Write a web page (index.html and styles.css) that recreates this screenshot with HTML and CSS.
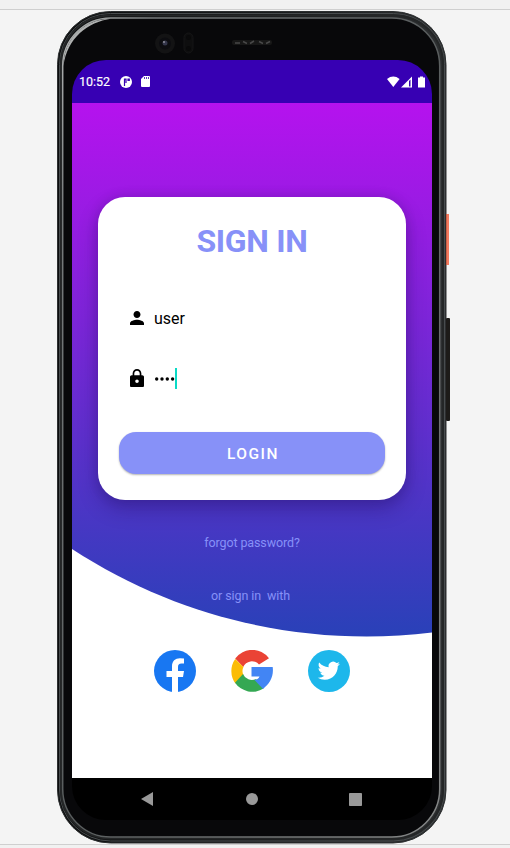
FILE: index.html
```html
<!DOCTYPE html>
<html lang="en">
<head>
<meta charset="utf-8">
<title>Sign in</title>
<link rel="stylesheet" href="styles.css">
</head>
<body>
<div class="stage">
  <div class="phone">
    <svg class="frame" width="396" height="834" viewBox="56 10 396 834" aria-hidden="true">
      <defs>
        <linearGradient id="rim" x1="0" y1="0" x2="1" y2="1"><stop offset="0" stop-color="#b6b8b8"/><stop offset=".12" stop-color="#777b7c"/><stop offset=".5" stop-color="#585c5d"/><stop offset="1" stop-color="#858787"/></linearGradient>
        <linearGradient id="shell"><stop offset="0" stop-color="#0c0d0e"/><stop offset=".5" stop-color="#17191a"/><stop offset="1" stop-color="#2d2f31"/></linearGradient>
      </defs>
      <rect x="57.5" y="11.5" width="388.500" height="831.5" rx="53" fill="url(#shell)" stroke="#2c2f30"/>
      <rect x="59.5" y="13.5" width="385" height="827.5" rx="51" fill="none" stroke="#484c4e"/>
      <rect x="61" y="15.5" width="382" height="823" rx="49" fill="none" stroke="#242627" stroke-width="2"/>
      <rect x="62.700" y="18" width="377" height="819" rx="48" fill="#08080a" stroke="url(#rim)" stroke-width="1.500"/>
      <path d="M63.500 66C63.500 39 84 19 111 18.800C88 22 67 38 63.500 66Z" fill="#aeb0b0"/>
      <rect x="446" y="214" width="3" height="51" fill="#f47a5f"/>
      <path d="M446.500 214v51" stroke="#c96048"/>
      <rect x="446" y="318" width="4" height="103" rx="1" fill="#1d1b19"/>
      <circle cx="165" cy="43.5" r="10" fill="#131314"/><circle cx="165" cy="43.5" r="6" fill="#0c0c10"/><circle cx="165" cy="43" r="2.5" fill="#34364b"/><circle cx="164" cy="42" r="1" fill="#8c8c99"/>
      <rect x="184" y="33" width="9" height="20" rx="4.5" fill="#0e0e0f" stroke="#151516"/><circle cx="188.500" cy="37.500" r="2.500" fill="#09090a"/><circle cx="188.500" cy="48.500" r="2.500" fill="#09090a"/>
      <rect x="232" y="40" width="40" height="5" rx="2" fill="#171717"/><path d="M235 43h5M243 41.500l4 2M250 43.500l4-2.500M259 41.500l4 2M266 43.500l4-2" stroke="#484848" stroke-width="1.500"/>
    </svg>
    <main class="screen">
      <header class="status">
        <span class="time">10:52</span>
        <svg class="app" width="12" height="12" viewBox="0 0 12 12"><circle cx="6" cy="6" r="6" fill="#fff"/><path d="M4.500 10V3.200H6V7M8 3.200h1.300v1.300H8z" fill="none" stroke="#3700b3" stroke-width="1.200"/></svg>
        <svg class="sd" width="9" height="11" viewBox="0 0 9 11"><path d="M3 0h5q1 0 1 1v9q0 1-1 1H1q-1 0-1-1V3z" fill="#fff"/><path d="M3.500 1v2M5.500 1v2M7.500 1v2" stroke="#3700b3" stroke-width=".8"/></svg>
        <svg class="signals" width="39" height="12" viewBox="0 0 39 12" fill="#fff"><path d="M0 3Q6.300-1.800 12.600 3L6.300 11z"/><path d="M14 11.500L25 .5v11z"/><path d="M22 5v5.500h1.500V3.500z" fill="#3700b3"/><path d="M31 1.500h2V.5h3v1h2v10h-7z"/></svg>
      </header>
      <section class="content">
        <svg class="backdrop" width="360" height="675" viewBox="0 0 360 675" aria-hidden="true">
          <defs><linearGradient id="sky" gradientUnits="userSpaceOnUse" x1="0" y1="0" x2="0" y2="534"><stop offset="0" stop-color="#b512ee"/><stop offset="1" stop-color="#2941b8"/></linearGradient></defs>
          <path d="M0 0H360V529.500C240 544 112 519 0 446Z" fill="url(#sky)"/>
        </svg>
        <div class="card">
          <h1>SIGN IN</h1>
          <div class="field user">
            <svg width="14" height="14" viewBox="4 4 16 16"><path d="M12 12c2.210 0 4-1.790 4-4s-1.790-4-4-4-4 1.790-4 4 1.790 4 4 4zm0 2c-2.670 0-8 1.340-8 4v2h16v-2c0-2.660-5.330-4-8-4z"/></svg>
            <span>user</span>
          </div>
          <div class="field secret">
            <svg width="14" height="18.400" viewBox="4 1 16 21"><path d="M18 8h-1V6c0-2.760-2.240-5-5-5S7 3.240 7 6v2H6c-1.100 0-2 .9-2 2v10c0 1.100.9 2 2 2h12c1.100 0 2-.9 2-2V10c0-1.100-.9-2-2-2zm-6 9c-1.100 0-2-.9-2-2s.9-2 2-2 2 .9 2 2-.9 2-2 2zm3.100-9H8.900V6c0-1.710 1.390-3.100 3.100-3.100s3.100 1.390 3.100 3.100v2z"/></svg>
            <svg class="dots" width="21" height="4" viewBox="0 0 21 4"><circle cx="2.700" cy="2" r="1.700"/><circle cx="8" cy="2" r="1.700"/><circle cx="13.300" cy="2" r="1.700"/><circle cx="18.600" cy="2" r="1.700"/></svg><span class="caret"></span>
          </div>
          <button class="login">LOGIN</button>
        </div>
        <p class="forgot">forgot password?</p>
        <p class="with">or sign in&nbsp; with</p>
        <div class="social">
          <svg width="42" height="42" viewBox="0 0 42 42"><circle cx="21" cy="21" r="21" fill="#1877f2"/><path d="M18 42V27h-5.500v-6H18v-4.500c0-5.500 3.200-8.300 8-8.300q2.200 0 4 .4v5h-2.500c-2.700 0-3.500 1.600-3.500 3.400v4h6l-1 6h-5v15z" fill="#fff"/></svg>
          <svg width="42" height="42" viewBox="0 0 42 42"><path d="M4.200 8.500A21 21 0 0 1 38 8.300L28 14.500A9.500 9.500 0 0 0 12.200 17z" fill="#ea4335"/><path d="M4.200 9A21 21 0 0 0 4.400 33.500L12.400 25a9.500 9.500 0 0 1 0-8z" fill="#fbbc05"/><path d="M4 32.800A21 21 0 0 0 32.500 38.500L25 29a9.500 9.500 0 0 1-13-5z" fill="#34a853"/><path d="M20.500 17h21.200C43 27 38.500 34 32 38.900L23.500 30q4-1 5-3.500h-8z" fill="#4285f4"/></svg>
          <svg width="42" height="42" viewBox="0 0 42 42"><circle cx="21" cy="21" r="21" fill="#1db7eb"/><path transform="translate(9.700 9.500) scale(.93)" fill="#fff" d="M23.953 4.570a10 10 0 0 1-2.825.775 4.958 4.958 0 0 0 2.163-2.723c-.951.555-2.005.959-3.127 1.184a4.920 4.920 0 0 0-8.384 4.482C7.690 8.095 4.067 6.130 1.640 3.162a4.822 4.822 0 0 0-.666 2.475c0 1.710.87 3.213 2.188 4.096a4.904 4.904 0 0 1-2.228-.616v.060a4.923 4.923 0 0 0 3.946 4.827 4.996 4.996 0 0 1-2.212.085 4.936 4.936 0 0 0 4.604 3.417 9.867 9.867 0 0 1-6.102 2.105c-.39 0-.779-.023-1.170-.067a13.995 13.995 0 0 0 7.557 2.209c9.053 0 13.998-7.496 13.998-13.985 0-.21 0-.42-.015-.63A9.935 9.935 0 0 0 24 4.590z"/></svg>
        </div>
      </section>
      <nav class="navbar">
        <svg width="12" height="14" viewBox="0 0 12 14"><path d="M12 0v14L0 7z"/></svg>
        <svg class="home" width="12" height="12" viewBox="0 0 12 12"><circle cx="6" cy="6" r="6"/></svg>
        <svg width="13" height="13" viewBox="0 0 13 13"><rect width="13" height="13" rx=".8"/></svg>
      </nav>
    </main>
  </div>
</div>
</body>
</html>
```
FILE: styles.css
```css
* { box-sizing: border-box; }
html, body { margin: 0; height: 100%; overflow: hidden; }
body { background: #f1f1f1; font-family: Roboto, sans-serif; padding-top: 9px; }
svg { display: block; flex: none; }
.stage { height: 836px; background: #f4f4f4; border-top: 1px solid #cfcfcf; border-bottom: 1px solid #cfcfcf; }
.phone { position: relative; width: 396px; height: 834px; margin-left: 56px; padding: 50px 20px 24px 16px; }
.frame { position: absolute; inset: 0; }
.screen { position: relative; width: 360px; height: 760px; border-radius: 34px; overflow: hidden; }
.status { height: 43px; background: #3700b3; color: #fff; display: flex; align-items: center; padding: 0 6px 0 7px; }
.time { font-size: 12.500px; font-weight: 400; line-height: 15px; width: 41px; -webkit-text-stroke: .15px #fff; }
.app { margin-right: 9px; }
.signals { margin-left: auto; }
.content { position: relative; height: 675px; display: flex; flex-direction: column; padding-top: 94px; background: #fff; }
.backdrop { position: absolute; inset: 0; }
.card { position: relative; width: 308px; height: 303px; margin-left: 26px; background: #fff; border-radius: 27px; padding: 24px 21px 26px; display: flex; flex-direction: column; box-shadow: 0 9px 20px rgba(20, 5, 65, .28), 0 0 12px rgba(20, 5, 65, .14); }
h1 { margin: 0; text-align: center; color: #8791f8; font-size: 32px; font-weight: 700; line-height: 40px; letter-spacing: -.3px; }
.field { display: flex; align-items: center; height: 24px; margin-left: 11px; font-size: 16px; color: #000; }
.field svg { margin-right: 10px; }
.user { margin-top: 45px; }
.user svg { margin-top: -1px; }
.secret { margin-top: 36px; }
.field .dots { margin: 2px 0 0; }
.caret { width: 2px; height: 21px; background: #09dac6; }
.login { margin-top: auto; height: 42px; border: 0; border-radius: 17px; background: #8791f8; color: #fff; font: 500 15.500px Roboto, sans-serif; letter-spacing: 1.500px; padding: 2px 0 0 2px; box-shadow: 0 1px 2px rgba(0, 0, 0, .3); }
p { position: relative; margin: 0; text-align: center; font-size: 12.500px; line-height: 16px; color: #8791f8; letter-spacing: -.1px; }
.forgot { margin-top: 35px; }
.with { margin-top: 37px; padding-right: 3px; }
.social { position: relative; display: flex; justify-content: center; gap: 35px; margin-top: 46.400px; }
.navbar { height: 42px; background: #000; fill: #999; display: flex; align-items: center; justify-content: space-between; padding: 0 70px 0 69px; }
.home { margin-left: 1px; }
```
